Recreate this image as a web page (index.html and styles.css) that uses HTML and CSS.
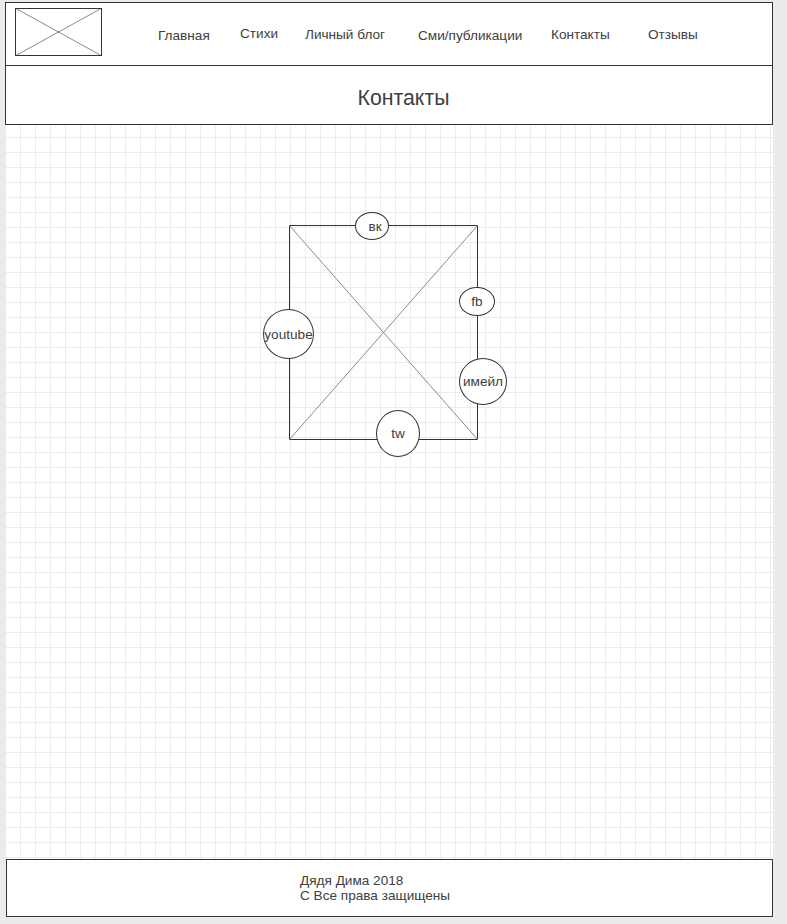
FILE: index.html
```html
<!DOCTYPE html>
<html lang="ru">
<head>
<meta charset="utf-8">
<title>Контакты</title>
<link rel="stylesheet" href="styles.css">
</head>
<body>
<div class="page">
  <header class="header">
    <div class="logo">
      <svg width="87" height="48" viewBox="0 0 87 48" class="logo-x">
        <line x1="0" y1="0" x2="87" y2="48"/>
        <line x1="87" y1="0" x2="0" y2="48"/>
      </svg>
    </div>
    <nav class="nav">
      <span class="nav-item w1 low">Главная</span>
      <span class="nav-item w2 high">Стихи</span>
      <span class="nav-item w3">Личный блог</span>
      <span class="nav-item w4 low">Сми/публикации</span>
      <span class="nav-item w5">Контакты</span>
      <span class="nav-item">Отзывы</span>
    </nav>
  </header>
  <div class="title-box">
    <h1 class="title">Контакты</h1>
  </div>
  <main class="canvas-area">
    <div class="diagram">
      <svg class="diagram-x" width="189" height="215" viewBox="0 0 189 215">
        <line x1="0" y1="0" x2="189" y2="215"/>
        <line x1="189" y1="0" x2="0" y2="215"/>
      </svg>
      <div class="node node-vk">вк</div>
      <div class="node node-fb">fb</div>
      <div class="node node-yt">youtube</div>
      <div class="node node-mail">имейл</div>
      <div class="node node-tw">tw</div>
    </div>
  </main>
  <footer class="footer">
    <div class="footer-text">
      <div>Дядя Дима 2018</div>
      <div>С Все права защищены</div>
    </div>
  </footer>
</div>
</body>
</html>
```

FILE: styles.css
```css
html, body {
  margin: 0;
  padding: 0;
}
body {
  background: #ebebeb;
  font-family: "Liberation Sans", Arial, sans-serif;
  color: #404040;
  width: 787px;
  height: 924px;
  overflow: hidden;
}
.page {
  margin: 2px 0 0 5px;
  width: 768px;
  height: 915px;
  display: flex;
  flex-direction: column;
  background-color: #fff;
  background-image:
    linear-gradient(to right, #ececec 1px, transparent 1px),
    linear-gradient(to bottom, #ececec 1px, transparent 1px);
  background-size: 15px 15px;
}
.header {
  box-sizing: border-box;
  height: 64px;
  border: 1px solid #333;
  background: #fff;
  display: flex;
  align-items: center;
}
.logo {
  align-self: flex-start;
  margin: 5px 0 0 9px;
  box-sizing: border-box;
  width: 87px;
  height: 48px;
  border: 1px solid #333;
  position: relative;
  overflow: hidden;
}
.logo-x {
  position: absolute;
  left: -1px;
  top: -1px;
}
.logo-x line, .diagram-x line {
  stroke: #8a8a8a;
  stroke-width: 1;
}
.nav {
  display: flex;
  align-items: center;
  margin-left: 56px;
  font-size: 13.6px;
  color: #404040;
}
.nav-item {
  white-space: nowrap;
  line-height: 15px;
}
.nav-item.low { margin-top: 3px; }
.nav-item.high { margin-top: -1px; }
.w1 { width: 82px; }
.w2 { width: 65px; }
.w3 { width: 113px; }
.w4 { width: 133px; }
.w5 { width: 97px; }
.title-box {
  box-sizing: border-box;
  height: 59px;
  border: 1px solid #333;
  border-top: none;
  background: #fff;
  display: flex;
  align-items: center;
  justify-content: center;
  padding: 6px 0 0 29px;
}
.title {
  margin: 0;
  font-size: 21.3px;
  font-weight: normal;
  color: #404040;
}
.canvas-area {
  height: 734px;
  flex: none;
}
.diagram {
  position: relative;
  box-sizing: border-box;
  width: 189px;
  height: 215px;
  margin: 100px 0 0 284px;
  border: 1px solid #333;
}
.diagram-x {
  position: absolute;
  left: -1px;
  top: -1px;
}
.node {
  position: absolute;
  box-sizing: border-box;
  border: 1px solid #333;
  border-radius: 50%;
  background: #fff;
  display: flex;
  align-items: center;
  justify-content: center;
  font-size: 13.6px;
  color: #404040;
  white-space: nowrap;
}
.node-vk { left: 65px; top: -14px; width: 34px; height: 28px; padding-left: 6px; }
.node-fb { left: 169px; top: 61px; width: 36px; height: 29px; }
.node-yt { left: -27px; top: 83px; width: 51px; height: 50px; }
.node-mail { left: 169px; top: 132px; width: 48px; height: 47px; }
.node-tw { left: 86px; top: 184px; width: 44px; height: 47px; }
.footer {
  box-sizing: border-box;
  height: 58px;
  margin-left: 1px;
  border: 1px solid #333;
  background: #fff;
  display: flex;
  align-items: center;
  padding-left: 293px;
}
.footer-text {
  font-size: 13.6px;
  line-height: 15px;
  color: #404040;
}
```
